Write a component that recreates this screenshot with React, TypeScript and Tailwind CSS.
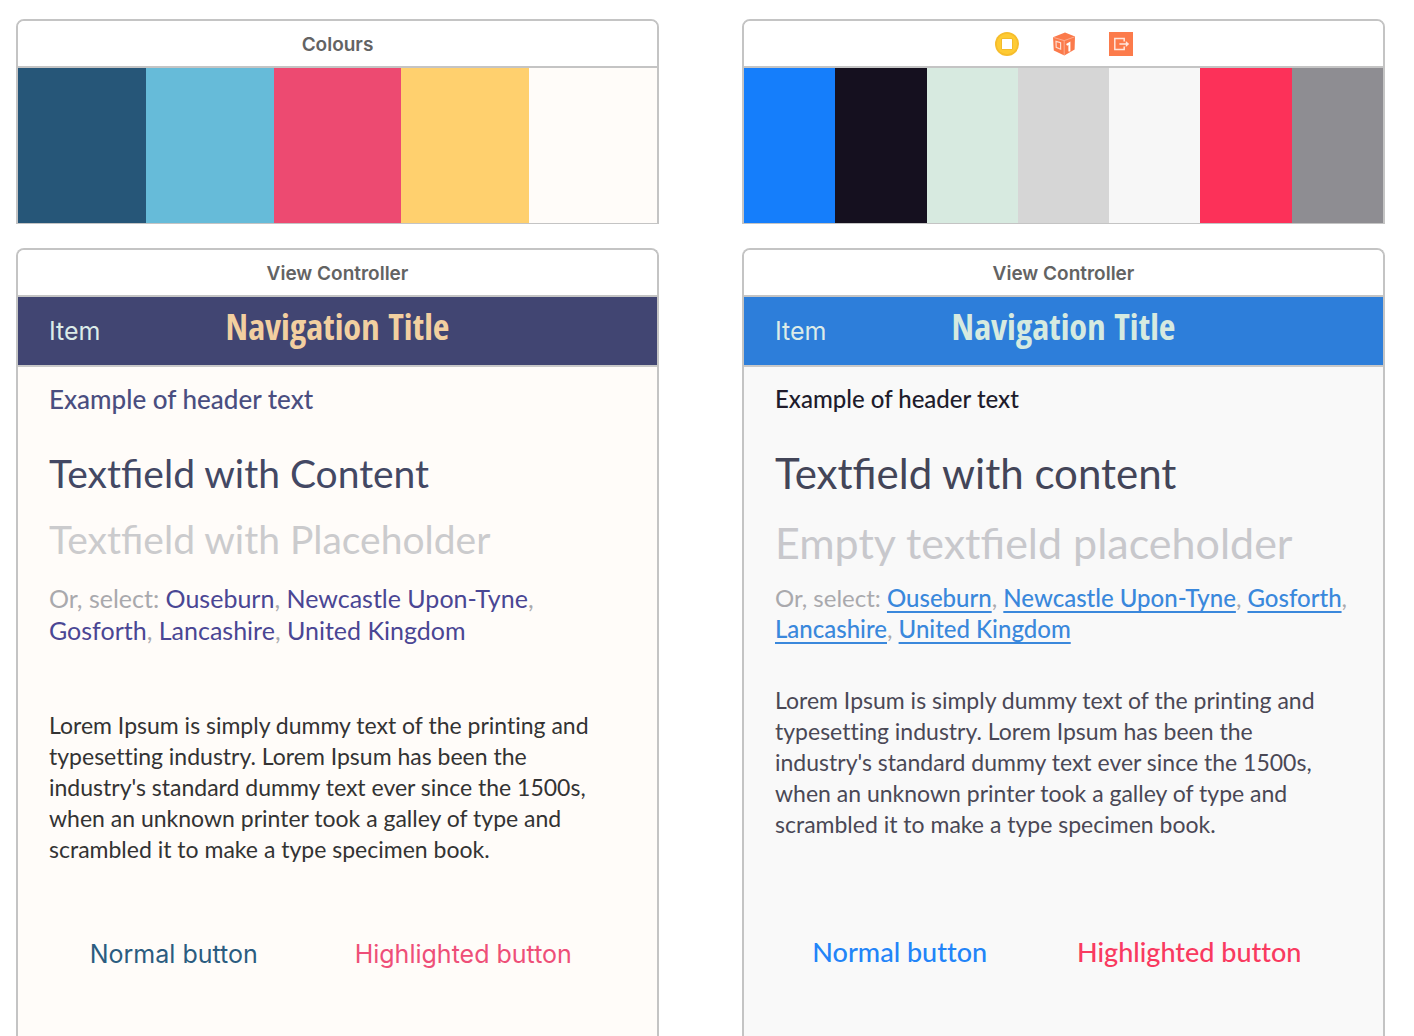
import { Fragment, type ReactNode } from "react";
import clsx from "clsx";

const PLACES = ["Ouseburn", "Newcastle Upon-Tyne", "Gosforth", "Lancashire", "United Kingdom"];

const LOREM =
  "Lorem Ipsum is simply dummy text of the printing and typesetting industry. Lorem Ipsum has been the industry's standard dummy text ever since the 1500s, when an unknown printer took a galley of type and scrambled it to make a type specimen book.";

function TitleBar({ children }: { children: ReactNode }) {
  return (
    <div className="flex h-[47px] items-center justify-center border-b-2 border-[#c4c4c4] bg-white">
      {children}
    </div>
  );
}

function BarTitle({ children }: { children: ReactNode }) {
  return (
    <h2 className="pt-1 font-['Inter',sans-serif] text-[19px] font-semibold text-[#636363]">{children}</h2>
  );
}

function PaletteCard({ header, swatches }: { header: ReactNode; swatches: string[] }) {
  return (
    <section className="overflow-hidden rounded-t-lg border-2 border-b border-[#c4c4c4]">
      <TitleBar>{header}</TitleBar>
      <div className="flex h-[155px]">
        {swatches.map((colour) => (
          <div key={colour} className={clsx("flex-1", colour)} />
        ))}
      </div>
    </section>
  );
}

function SceneIcons() {
  return (
    <div className="flex gap-[33px]">
      <svg width="24" height="24" viewBox="0 0 24 24" aria-label="View controller">
        <circle cx="12" cy="12" r="12" fill="#f6bd2c" />
        <circle cx="12" cy="12" r="10.2" fill="#fecb33" />
        <rect x="6.2" y="6.2" width="11.6" height="11.6" rx="1" fill="#f0b62a" />
        <rect x="7" y="7" width="10" height="10" rx="0.6" fill="#fff" />
      </svg>
      <svg width="24" height="24" viewBox="0 0 24 24" aria-label="First responder">
        <path d="M13 0.4 23 4.6 22.6 17.4 12.4 23.4 1.8 18.6 1 5.2z" fill="#fb7a4b" />
        <path d="M1.4 5.4 12.2 8.6 22.8 4.8M12.2 8.6v14.4" fill="none" stroke="#fdb297" strokeWidth="0.9" />
        <path d="M4 9.4 8.6 10.8v6.4L4.2 15.4z" fill="none" stroke="#fedccf" strokeWidth="1.2" />
        <path d="M14.6 12.8 17.4 11.2v8.2" fill="none" stroke="#fff" strokeWidth="2" />
      </svg>
      <svg width="24" height="24" viewBox="0 0 24 24" aria-label="Exit">
        <rect width="24" height="24" fill="#fc7b4b" />
        <path d="M15.2 9.4V6.4H5.8v11.2h9.4v-3" fill="none" stroke="#ffe6dc" strokeWidth="1.5" />
        <path d="M10.4 12h7.4" stroke="#ffe6dc" strokeWidth="1.4" />
        <path d="M16.8 9 20.2 12l-3.4 3z" fill="#ffe6dc" />
      </svg>
    </div>
  );
}

function NavBar({ className, titleClass }: { className: string; titleClass: string }) {
  return (
    <nav
      className={clsx(
        "grid h-[70px] grid-cols-[1fr_auto_1fr] items-baseline border-b-2 border-[#c8c8c8] px-[31px] pt-[5px]",
        className,
      )}
    >
      <button type="button" className="justify-self-start font-['Inter',sans-serif] text-[25px] text-[#dcebe8]">
        Item
      </button>
      <h3 className={clsx("font-['Open_Sans_Condensed','Open_Sans',sans-serif] text-[36px] leading-[50px] font-bold", titleClass)}>
        Navigation Title
      </h3>
    </nav>
  );
}

function PlaceLinks({ className, linkClass }: { className: string; linkClass: string }) {
  return (
    <p className={clsx("text-[#a9a9ad]", className)}>
      Or, select:{" "}
      {PLACES.map((place, i) => (
        <Fragment key={place}>
          {i > 0 && ", "}
          <a href="#" className={linkClass}>
            {place}
          </a>
        </Fragment>
      ))}
    </p>
  );
}

const card = "flex flex-1 flex-col overflow-hidden rounded-t-lg border-2 border-b-0 border-[#c4c4c4]";
const field = "h-12 w-full bg-transparent outline-none";
const copy = "text-[23px] leading-[31px] [font-variant-ligatures:none]";
const buttonRow = "grid grid-cols-2 pr-[49px] pl-[11px] leading-8 [font-variant-ligatures:none]";

export default function App() {
  return (
    <main className="grid min-h-screen grid-cols-2 gap-[83px] bg-white pt-[19px] pr-[29px] pl-4 font-['Lato',sans-serif]">
      <div className="flex flex-col gap-6">
        <PaletteCard
          header={<BarTitle>Colours</BarTitle>}
          swatches={["bg-[#265678]", "bg-[#66bbd9]", "bg-[#ed4a71]", "bg-[#ffd06e]", "bg-[#fffcf9]"]}
        />
        <section className={card}>
          <TitleBar>
            <BarTitle>View Controller</BarTitle>
          </TitleBar>
          <NavBar className="bg-[#414572]" titleClass="text-[#f2cfa0]" />
          <div className="flex-1 bg-[#fffcf9] pt-4 pb-8">
            <div className="px-[31px]">
              <h4 className="text-[26px] leading-8 font-medium text-[#4a4e80]">Example of header text</h4>
              <input aria-label="Content" defaultValue="Textfield with Content" className={clsx(field, "mt-[34px] text-[39px] text-[#434864]")} />
              <input aria-label="Placeholder" placeholder="Textfield with Placeholder" className={clsx(field, "mt-[18px] text-[39px] placeholder:text-[#cbcbcd]")} />
              <PlaceLinks className="mt-[19px] text-[25px] leading-8" linkClass="text-[#4a4694]" />
              <p className={clsx(copy, "mt-16 text-[#333]")}>{LOREM}</p>
            </div>
            <div className={clsx(buttonRow, "mt-[73px] font-['Inter',sans-serif] text-[25px]")}>
              <button type="button" className="text-[#2b5c80]">Normal button</button>
              <button type="button" className="text-[#ee4f78]">Highlighted button</button>
            </div>
          </div>
        </section>
      </div>

      <div className="flex flex-col gap-6">
        <PaletteCard
          header={<SceneIcons />}
          swatches={["bg-[#157efb]", "bg-[#15101f]", "bg-[#d7eae0]", "bg-[#d6d6d6]", "bg-[#f7f7f7]", "bg-[#fc3159]", "bg-[#8e8d92]"]}
        />
        <section className={card}>
          <TitleBar>
            <BarTitle>View Controller</BarTitle>
          </TitleBar>
          <NavBar className="bg-[#2d7eda]" titleClass="text-[#d6eae0]" />
          <div className="flex-1 bg-[#f9f9f9] pt-4 pb-8">
            <div className="px-[31px]">
              <h4 className="text-[24px] leading-8 font-medium text-[#201c2c]">Example of header text</h4>
              <input aria-label="Content" defaultValue="Textfield with content" className={clsx(field, "mt-[34px] text-[42px] text-[#434558]")} />
              <input aria-label="Placeholder" placeholder="Empty textfield placeholder" className={clsx(field, "mt-[22px] text-[43px] placeholder:text-[#c8c8cc]")} />
              <PlaceLinks
                className="mt-[15px] text-[24px] leading-[31px]"
                linkClass="font-medium text-[#3a88dc] underline decoration-2 underline-offset-4 [text-decoration-skip-ink:none]"
              />
              <p className={clsx(copy, "mt-[41px] text-[#4a4855]")}>{LOREM}</p>
            </div>
            <div className={clsx(buttonRow, "mt-24 text-[27px] font-medium")}>
              <button type="button" className="text-[#2284f8]">Normal button</button>
              <button type="button" className="text-[#f93a60]">Highlighted button</button>
            </div>
          </div>
        </section>
      </div>
    </main>
  );
}
